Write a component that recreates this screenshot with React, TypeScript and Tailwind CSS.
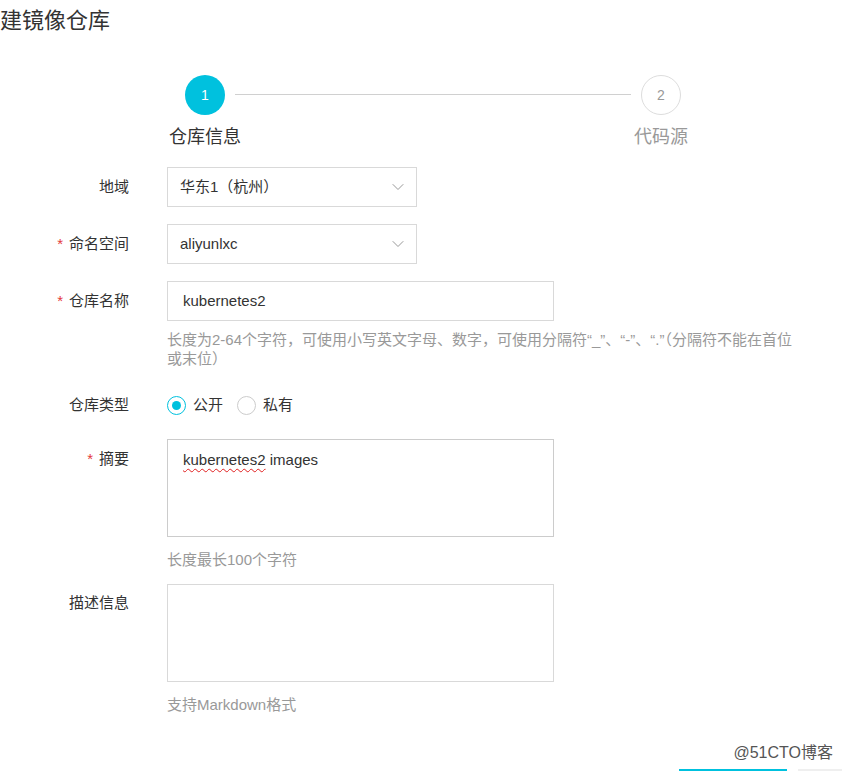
import { ChevronDown } from "lucide-react"

const font = { fontFamily: '"Liberation Sans", "Noto Sans CJK SC", sans-serif' }

function Label({ text, required }: { text: string; required?: boolean }) {
  return (
    <div className="w-[129px] shrink-0 text-right text-[15px] leading-[20px] text-[#333]">
      {required && <span className="mr-[6px] text-[#e4393c]">*</span>}
      {text}
    </div>
  )
}

function Select({ value }: { value: string }) {
  return (
    <div className="flex h-10 w-[250px] items-center justify-between border border-[#d9d9d9] pl-[12px] pr-[8px] text-[15px] text-[#333]">
      <span>{value}</span>
      <ChevronDown className="h-5 w-5 text-[#999]" strokeWidth={1.2} />
    </div>
  )
}

function Help({ children }: { children: React.ReactNode }) {
  return <div className="text-[15px] leading-[19px] text-[#999]">{children}</div>
}

export default function App() {
  return (
    <div className="relative h-[771px] w-[842px] overflow-hidden bg-white text-[#333]" style={font}>
      {/* 标题 */}
      <div className="pt-[5px] text-[22px] leading-[32px] text-[#333]">建镜像仓库</div>

      {/* 步骤条 */}
      <div className="mt-[38px] flex items-start pl-[185px]">
        <div className="flex w-10 flex-col items-center">
          <div className="flex h-10 w-10 items-center justify-center rounded-full bg-[#00c1de] text-[14px] text-white">1</div>
          <div className="mt-[9px] whitespace-nowrap text-[18px] leading-[26px] text-[#333]">仓库信息</div>
        </div>
        <div className="mx-[10px] mt-[19px] h-px w-[396px] bg-[#d0d0d0]" />
        <div className="flex w-10 flex-col items-center">
          <div className="flex h-10 w-10 items-center justify-center rounded-full border border-[#ddd] text-[14px] text-[#999]">2</div>
          <div className="mt-[9px] whitespace-nowrap text-[18px] leading-[26px] text-[#999]">代码源</div>
        </div>
      </div>

      {/* 表单 */}
      <div className="mt-[17px] flex flex-col">
        <div className="flex items-center">
          <Label text="地域" />
          <div className="ml-[38px]">
            <Select value="华东1（杭州）" />
          </div>
        </div>

        <div className="mt-[17px] flex items-center">
          <Label text="命名空间" required />
          <div className="ml-[38px]">
            <Select value="aliyunlxc" />
          </div>
        </div>

        <div className="mt-[17px] flex items-start">
          <div className="pt-[10px]">
            <Label text="仓库名称" required />
          </div>
          <div className="ml-[38px]">
            <div className="flex h-10 w-[387px] items-center border border-[#d9d9d9] px-[15px] text-[15px] text-[#333]">
              kubernetes2
            </div>
            <div className="mt-[9px]">
              <Help>
                长度为2-64个字符，可使用小写英文字母、数字，可使用分隔符“_”、“-”、“.”（分隔符不能在首位
                <br />
                或末位）
              </Help>
            </div>
          </div>
        </div>

        <div className="mt-[27px] flex items-center">
          <Label text="仓库类型" />
          <div className="ml-[38px] flex items-center text-[15px] leading-[20px] text-[#333]">
            <span className="flex h-[19px] w-[19px] items-center justify-center rounded-full border border-[#00c1de]">
              <span className="h-[9px] w-[9px] rounded-full bg-[#00c1de]" />
            </span>
            <span className="ml-[7px]">公开</span>
            <span className="ml-[14px] h-[19px] w-[19px] rounded-full border border-[#ccc]" />
            <span className="ml-[7px]">私有</span>
          </div>
        </div>

        <div className="mt-[24px] flex items-start">
          <div className="pt-[10px]">
            <Label text="摘要" required />
          </div>
          <div className="ml-[38px]">
            <div className="h-[98px] w-[387px] border border-[#ccc] px-[15px] pt-[10px] text-[15px] leading-[20px] text-[#333]">
              <span className="underline decoration-[#e02020] decoration-wavy decoration-1 underline-offset-[3px]">kubernetes2</span> images
            </div>
            <div className="mt-[13px]">
              <Help>长度最长100个字符</Help>
            </div>
          </div>
        </div>

        <div className="mt-[15px] flex items-start">
          <div className="pt-[9px]">
            <Label text="描述信息" />
          </div>
          <div className="ml-[38px]">
            <div className="h-[98px] w-[387px] border border-[#d9d9d9]" />
            <div className="mt-[13px]">
              <Help>支持Markdown格式</Help>
            </div>
          </div>
        </div>

        {/* 底部按钮 */}
        <div className="mt-[55px] flex pl-[679px]">
          <div className="h-8 w-[108px] shrink-0 bg-[#00c1de]" />
          <div className="ml-[11px] h-8 w-[80px] shrink-0 bg-[#efefef]" />
        </div>
      </div>

      {/* 水印 */}
      <div className="absolute right-[9px] top-[743px] text-[16px] leading-[20px] text-[#555]">@51CTO博客</div>
    </div>
  )
}
